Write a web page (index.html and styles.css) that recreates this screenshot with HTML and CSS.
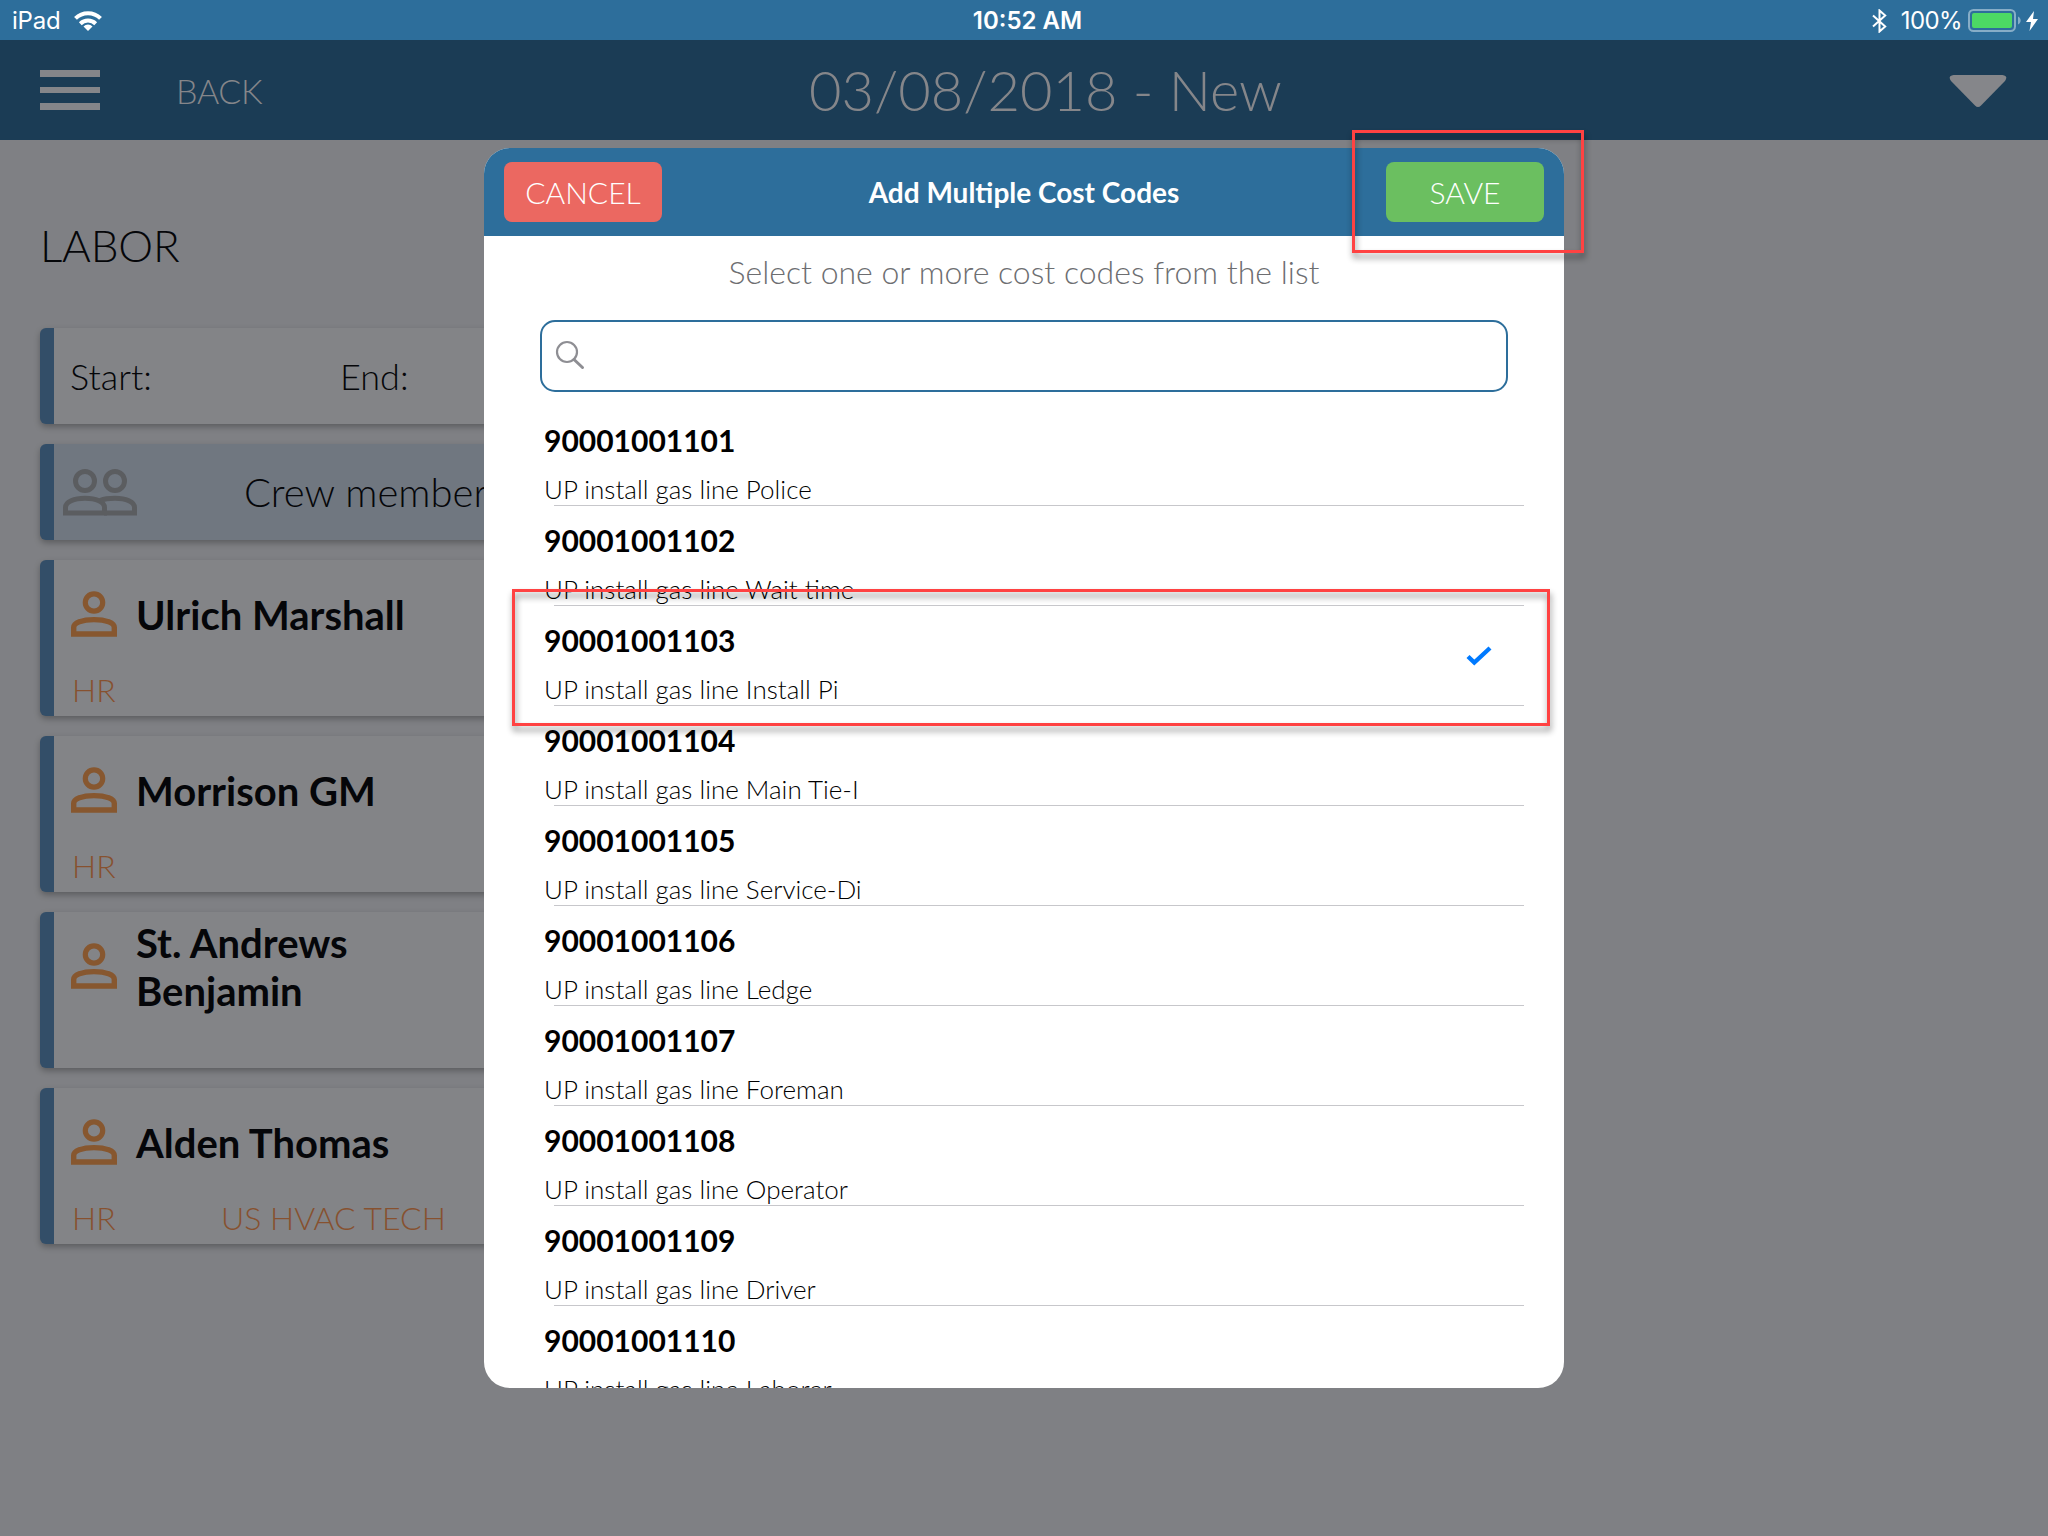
FILE: index.html
```
<!DOCTYPE html>
<html lang="en">
<head>
<meta charset="utf-8">
<title>Add Multiple Cost Codes</title>
<link rel="stylesheet" href="styles.css">
</head>
<body>
<svg class="defs" width="0" height="0" aria-hidden="true">
  <symbol id="person" viewBox="0 0 46 46">
    <circle cx="23" cy="11.500" r="8.700" fill="none" stroke="currentColor" stroke-width="5.200"/>
    <path d="M2.700 43V36.500C2.700 32 11 28.600 23 28.600S43.300 32 43.300 36.500V43Z" fill="none" stroke="currentColor" stroke-width="5.400"/>
  </symbol>
</svg>
<header class="status">
  <div class="status-left">
    <span class="device">iPad</span>
    <svg class="wifi" width="28" height="20" viewBox="0 0 28 20" fill="none" stroke="#fff" stroke-width="4">
      <path d="M1.500 7.400a17.700 17.700 0 0 1 25 0"/>
      <path d="M6.300 12.700a11 11 0 0 1 15.400 0"/>
      <path d="M14 20l-4.500-4.600a6.500 6.500 0 0 1 9 0z" fill="#fff" stroke="none"/>
    </svg>
  </div>
  <span class="clock">10:52 AM</span>
  <div class="status-right">
    <svg class="bluetooth" width="15" height="24" viewBox="0 0 15 24" fill="none" stroke="#fff" stroke-width="2"><path d="M1 6.500l12.200 11L7.500 22.500V1.500l5.700 5L1 17.500"/></svg>
    <span class="percent">100%</span>
    <svg class="battery" width="54" height="24" viewBox="0 0 54 24"><rect x="1" y="1" width="46" height="21" rx="4.500" fill="none" stroke="#86adc7" stroke-width="2"/><rect x="4" y="4" width="40" height="15" rx="2" fill="#4cd964"/><path d="M50 7.500c3.600 1.500 3.600 6.500 0 8z" fill="#86adc7"/></svg>
    <svg class="bolt" width="12" height="20" viewBox="0 0 12 20"><path d="M8 0L0 11h5L3.500 20 12 8H7z" fill="#fff"/></svg>
  </div>
</header>
<nav class="navbar">
  <div class="burger"><i></i><i></i><i></i></div>
  <span class="back">BACK</span>
  <h1 class="nav-title">03/08/2018 - New</h1>
  <svg class="caret" width="58" height="34" viewBox="0 0 58 34"><path d="M4.500 1h49q6 1 2.500 6L32 31.500q-3 3-6 0L2 7Q-1.500 2 4.500 1z" fill="#85868a"/></svg>
</nav>
<main class="labor">
  <h2 class="section-title">LABOR</h2>
  <div class="cards">
    <section class="card times"><span class="start">Start:</span><span>End:</span></section>
    <section class="card crew">
      <svg class="crew-icon" width="74" height="47" viewBox="0 0 74 47" fill="none" stroke="#5b5d60" stroke-width="5"><circle cx="22" cy="12" r="9.500"/><circle cx="52" cy="12" r="9.500"/><path d="M2.500 44V38.500C2.500 33 11 29.300 22 29.300S41.500 33 41.500 38.500V44Z"/><path d="M37 31.500c4-1.500 9-2.200 15-2.200 11 0 19.500 3.700 19.500 9.200V44H41"/></svg>
      <span>Crew member</span>
    </section>
    <section class="card person"><div class="who"><svg class="avatar"><use href="#person"/></svg><span class="name">Ulrich Marshall</span></div><div class="tags"><span class="dept">HR</span></div></section>
    <section class="card person"><div class="who"><svg class="avatar"><use href="#person"/></svg><span class="name">Morrison GM</span></div><div class="tags"><span class="dept">HR</span></div></section>
    <section class="card person"><div class="who"><svg class="avatar"><use href="#person"/></svg><span class="name">St. Andrews Benjamin</span></div></section>
    <section class="card person"><div class="who"><svg class="avatar"><use href="#person"/></svg><span class="name">Alden Thomas</span></div><div class="tags"><span class="dept">HR</span><span class="trade">US HVAC TECH</span></div></section>
  </div>
</main>
<div class="modal">
  <div class="modal-head">
    <button class="btn cancel"><span>CANCEL</span></button>
    <span class="modal-title">Add Multiple Cost Codes</span>
    <button class="btn save"><span>SAVE</span></button>
  </div>
  <p class="hint"><span>Select one or more cost codes from the list</span></p>
  <div class="search"><svg width="30" height="30" viewBox="0 0 30 30" fill="none" stroke="#8e8e93"><circle cx="12" cy="12" r="10" stroke-width="2.200"/><path d="M19 19.500l8.500 8" stroke-width="3" stroke-linecap="round"/></svg></div>
  <ul class="codes">
    <li><b>90001001101</b><span>UP install gas line Police</span></li>
    <li><b>90001001102</b><span>UP install gas line Wait time</span></li>
    <li><b>90001001103</b><span>UP install gas line Install Pi</span><svg class="check" width="26" height="20" viewBox="0 0 26 20"><path d="M2 10.500l6.300 6L24 2" fill="none" stroke="#007aff" stroke-width="4.400"/></svg></li>
    <li><b>90001001104</b><span>UP install gas line Main Tie-I</span></li>
    <li><b>90001001105</b><span>UP install gas line Service-Di</span></li>
    <li><b>90001001106</b><span>UP install gas line Ledge</span></li>
    <li><b>90001001107</b><span>UP install gas line Foreman</span></li>
    <li><b>90001001108</b><span>UP install gas line Operator</span></li>
    <li><b>90001001109</b><span>UP install gas line Driver</span></li>
    <li><b>90001001110</b><span>UP install gas line Laborer</span></li>
  </ul>
</div>
<div class="callout callout-save"></div>
<div class="callout callout-row"></div>
</body>
</html>
```
FILE: styles.css
```
* { box-sizing: border-box; }
body { margin: 0; width: 2048px; height: 1536px; overflow: hidden; position: relative; background: #7f8084; font-family: Lato, sans-serif; font-weight: 300; color: #050609; }
h1, h2, p, ul { margin: 0; padding: 0; font-weight: 300; }
svg { display: block; flex: none; }
.defs { position: absolute; }

.status { height: 40px; background: #2d6e9b; color: #fff; display: grid; grid-template-columns: 1fr auto 1fr; align-items: center; font-family: Inter, sans-serif; font-size: 24px; font-weight: 400; line-height: 38px; padding: 1px 10px 0 12px; }
.status-left, .status-right { display: flex; align-items: center; }
.status-left span, .percent, .clock { padding-top: 1px; }
.status-left { gap: 13px; letter-spacing: -.2px; }
.status-right { justify-content: flex-end; }
.clock { font-weight: 600; margin-left: 5px; }
.percent { margin: 0 6px 0 14px; letter-spacing: -.6px; }
.bolt { margin-left: 4px; }

.navbar { height: 100px; background: #1b3c55; color: #85868a; display: flex; align-items: center; padding: 0 41px 0 40px; }
.burger { display: flex; flex-direction: column; gap: 10px; width: 60px; }
.burger i { height: 6.700px; background: #85868a; }
.back { font-size: 34px; margin-left: 76px; width: 200px; line-height: 44px; padding-top: 1px; letter-spacing: -.3px; }
.nav-title { font-size: 56px; line-height: 68px; flex: 1; margin-left: 433px; white-space: nowrap; }
.caret { margin-top: 2px; }

.labor { padding: 79px 0 0 40px; width: 1100px; }
.section-title { font-size: 44px; line-height: 53px; height: 109px; letter-spacing: -.2px; }
.cards { display: flex; flex-direction: column; gap: 20px; }
.card { background: #838487; border-left: 14px solid #334e68; border-radius: 6px; box-shadow: 0 3px 6px rgba(0,0,0,.28); }
.times, .crew { height: 96px; display: flex; align-items: center; }
.times { font-size: 36px; padding-left: 16px; }
.start { width: 270px; }
.crew { background: #707780; font-size: 40px; padding-left: 9px; gap: 107px; }
.person { height: 156px; display: flex; flex-direction: column; justify-content: space-between; padding: 7px 0 6px 17px; }
.who { display: flex; align-items: center; height: 96px; gap: 19px; }
.avatar { width: 46px; height: 46px; margin-bottom: 2px; color: #87572f; }
.name { font-size: 40px; font-weight: 700; line-height: 48px; width: 300px; }
.tags { display: flex; font-size: 32px; line-height: 40px; color: #87512f; padding-left: 1px; }
.dept { width: 149px; }

.modal { position: absolute; left: 484px; top: 148px; width: 1080px; height: 1240px; border-radius: 26px; background: #fff; overflow: hidden; }
.modal-head { height: 88px; background: #2d6e9b; color: #fff; display: flex; align-items: center; justify-content: space-between; padding: 0 20px; }
.btn { width: 158px; height: 60px; border: 0; border-radius: 8px; color: #fff; font: 300 30px/60px Lato, sans-serif; padding: 0; }
.cancel { background: #eb6861; }
.save { background: #6bbf60; }
.modal-title { font-size: 28px; font-weight: 700; line-height: 34px; }
.hint { text-align: center; font-size: 32px; line-height: 40px; color: #6d6e71; height: 84px; padding-top: 16px; }
.search { height: 72px; margin: 0 56px; border: 2px solid #2d6e9b; border-radius: 15px; padding: 18px 0 0 13px; }
.codes { list-style: none; padding-top: 14px; }
.codes li { height: 100px; position: relative; padding: 16px 0 0 60px; color: #000; display: flex; flex-direction: column; }
.codes li::after { content: ""; position: absolute; left: 70px; right: 40px; bottom: 0; height: 1px; background: #c7c7cb; }
.codes b { font-size: 30px; font-weight: 700; line-height: 36px; }
.codes span { font-size: 26px; line-height: 32px; margin-top: 15px; }
.check { position: absolute; left: 982px; top: 40px; }

.callout { position: absolute; border: 3px solid #ff4242; filter: drop-shadow(1px 5px 3px rgba(0,0,0,.45)); }
.callout-save { left: 1352px; top: 130px; width: 232px; height: 123px; }
.callout-row { left: 512px; top: 589px; width: 1038px; height: 137px; }
```
